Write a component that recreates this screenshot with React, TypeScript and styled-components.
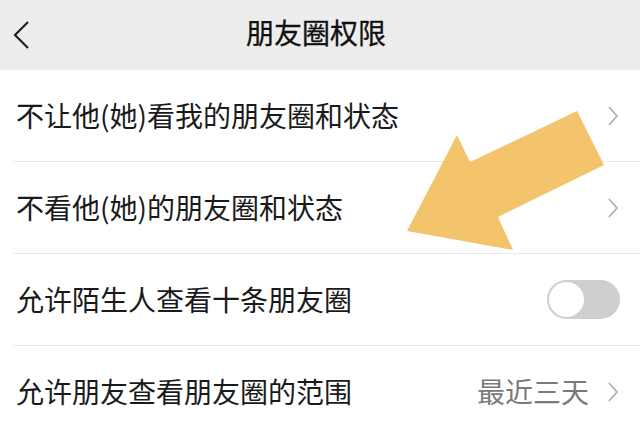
import styled, { createGlobalStyle } from "styled-components";

const GlobalStyle = createGlobalStyle`
  html, body {
    margin: 0;
    padding: 0;
    background: #ffffff;
  }
  body {
    font-family: "Noto Sans CJK SC", "Noto Sans", sans-serif;
    color: #1a1a1a;
    overflow: hidden;
  }
`;

const Page = styled.div`
  position: relative;
  width: 640px;
  height: 427px;
  overflow: hidden;
  background: #ffffff;
`;

const Header = styled.header`
  display: grid;
  grid-template-columns: 1fr auto 1fr;
  align-items: center;
  height: 70px;
  padding-right: 8px;
  box-sizing: border-box;
  background: #ededed;
`;

const BackButton = styled.div`
  display: flex;
  align-items: center;
  padding-left: 12px;
  color: #222;
`;

const Title = styled.h1`
  margin: 0;
  font-size: 28px;
  font-weight: 400;
  color: #111;
  line-height: 1;
  padding-bottom: 6px;
  -webkit-text-stroke: 0.3px #111;
`;

const List = styled.div`
  display: flex;
  flex-direction: column;
`;

const Row = styled.div`
  display: flex;
  align-items: center;
  justify-content: space-between;
  height: 92px;
  margin-left: 14px;
  padding: 0 20px 0 2px;
  border-bottom: 1px solid #e8e8e8;
  box-sizing: border-box;
`;

const Label = styled.span`
  font-size: 28px;
  line-height: 1;
  color: #1a1a1a;
  padding-bottom: 2px;
`;

const Trailing = styled.div`
  display: flex;
  align-items: center;
  gap: 17px;
`;

const Value = styled.span`
  font-size: 28px;
  line-height: 1;
  color: #7a7a7a;
  padding-bottom: 2px;
`;

const Toggle = styled.div<{ $on?: boolean }>`
  display: flex;
  align-items: center;
  width: 73px;
  height: 39px;
  border-radius: 20px;
  background: ${(p) => (p.$on ? "#07c160" : "#cfcfcf")};
  box-sizing: border-box;
  padding: 2px;
  justify-content: ${(p) => (p.$on ? "flex-end" : "flex-start")};
`;

const Knob = styled.div`
  width: 35px;
  height: 35px;
  border-radius: 50%;
  background: #ffffff;
`;

const Overlay = styled.svg`
  position: absolute;
  inset: 0;
  pointer-events: none;
`;

function Chevron() {
  return (
    <svg width="14" height="22" viewBox="0 0 14 22">
      <path d="M3 2 L11 11 L3 20" fill="none" stroke="#b2b2b2" strokeWidth="1.8" />
    </svg>
  );
}

function BackIcon() {
  return (
    <svg width="20" height="30" viewBox="0 0 20 30">
      <path d="M16 2 L3 15 L16 28" fill="none" stroke="#222" strokeWidth="2.2" />
    </svg>
  );
}

export default function App() {
  return (
    <>
      <GlobalStyle />
      <Page>
        <Header>
          <BackButton>
            <BackIcon />
          </BackButton>
          <Title>朋友圈权限</Title>
          <div />
        </Header>
        <List>
          <Row>
            <Label>不让他(她)看我的朋友圈和状态</Label>
            <Chevron />
          </Row>
          <Row>
            <Label>不看他(她)的朋友圈和状态</Label>
            <Chevron />
          </Row>
          <Row>
            <Label>允许陌生人查看十条朋友圈</Label>
            <Toggle>
              <Knob />
            </Toggle>
          </Row>
          <Row>
            <Label>允许朋友查看朋友圈的范围</Label>
            <Trailing>
              <Value>最近三天</Value>
              <Chevron />
            </Trailing>
          </Row>
        </List>
        <Overlay width="640" height="427" viewBox="0 0 640 427">
          <polygon
            points="407,231 457,135 470,162 577,111 604,165 498,217 513,250"
            fill="#f3c46c"
          />
        </Overlay>
      </Page>
    </>
  );
}
